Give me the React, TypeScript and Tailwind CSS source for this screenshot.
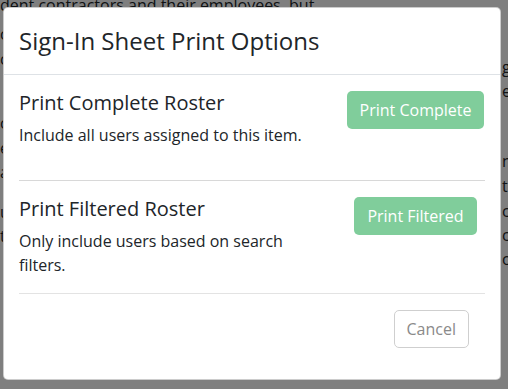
import React from "react";

export default function App() {
  return (
    <div
      className="relative w-[508px] h-[389px] overflow-hidden bg-white text-[#212529]"
      style={{ fontFamily: '"Open Sans", "Noto Sans", sans-serif' }}
    >
      <div className="flex text-[16px] leading-[24px] whitespace-nowrap">
        <div className="w-[502px] shrink-0 flex flex-col -mt-[7px]">
          <div>dent contractors and their employees, but</div>
          <div className="mt-[5px]">o</div>
          <div className="mt-[1px]">c</div>
          <div className="mt-[40px]">o</div>
          <div className="mt-[1px]">e</div>
          <div>a</div>
          <div className="mt-[16px]">u</div>
          <div>t</div>
        </div>
        <div className="flex flex-col pt-[55px]">
          <div>g</div>
          <div>er</div>
          <div className="mt-[46px]">n</div>
          <div className="mt-[1px]">tc</div>
          <div className="mt-[1px]">c</div>
          <div>c</div>
          <div>or</div>
        </div>
      </div>
      <div className="absolute inset-0 bg-black/50" />
      <div className="absolute left-[3px] top-[7px] w-[498px] h-[373px] bg-white rounded-[5px] border border-black/20 flex flex-col">
        <div className="px-[15px] py-[15px] border-b border-[#dee2e6]">
          <h5 className="text-[24px] leading-[36px] font-normal">Sign-In Sheet Print Options</h5>
        </div>
        <div className="px-[15px] pt-[16px] flex flex-col">
          <div className="flex">
            <div className="flex-1 pr-4">
              <div className="text-[20px] leading-[24px] mb-[8px]">Print Complete Roster</div>
              <p className="text-[16px] leading-[24px]">Include all users assigned to this item.</p>
            </div>
            <div className="w-[139px] flex justify-center items-start">
              <button className="h-[38px] px-[13px] rounded-[5px] bg-[#80cd9b] text-white text-[16px]">
                Print Complete
              </button>
            </div>
          </div>
          <div className="mt-[33px] border-t border-[#d8d8d8]" />
          <div className="flex mt-[16px]">
            <div className="flex-1 pr-4">
              <div className="text-[20px] leading-[24px] mb-[8px]">Print Filtered Roster</div>
              <p className="text-[16px] leading-[24px] max-w-[300px]">Only include users based on search filters.</p>
            </div>
            <div className="w-[139px] flex justify-center items-start">
              <button className="h-[38px] px-[13px] rounded-[5px] bg-[#80cd9b] text-white text-[16px]">
                Print Filtered
              </button>
            </div>
          </div>
          <div className="mt-[16px] border-t border-[#e3e3e3]" />
          <div className="flex justify-end mt-[16px] pr-[16px]">
            <button className="h-[38px] px-[12px] rounded-[5px] border border-[#cfcfcf] text-[#8a8a8a] text-[16px] bg-white">
              Cancel
            </button>
          </div>
        </div>
      </div>
    </div>
  );
}
